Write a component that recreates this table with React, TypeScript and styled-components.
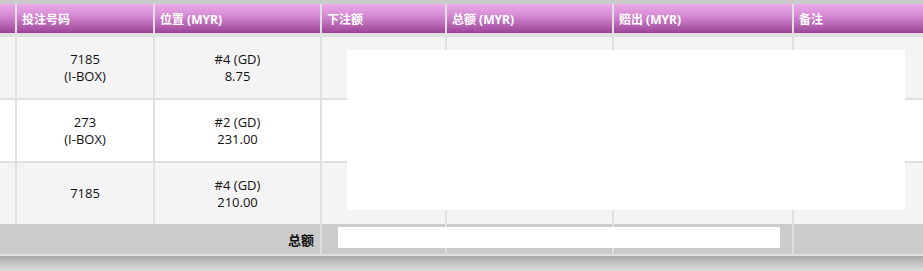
import { createGlobalStyle, styled } from "styled-components";

const GlobalStyle = createGlobalStyle`
  html, body {
    margin: 0;
    padding: 0;
    background: #e0e0e0;
  }
  body {
    font-family: "Open Sans", "Noto Sans CJK SC", sans-serif;
    font-size: 12px;
    color: #111;
  }
`;

const COLUMNS = "15px 136px 165px 123px 165px 178px 1fr";

const Board = styled.div`
  position: relative;
  width: 923px;
  height: 271px;
  overflow: hidden;
  background: #e0e0e0;
`;

const TopBar = styled.div`
  height: 4px;
  background: #c9c9c9;
`;

const Row = styled.div<{ $gapTop?: number }>`
  display: grid;
  grid-template-columns: ${COLUMNS};
  column-gap: 2px;
  margin-top: ${(p) => p.$gapTop ?? 0}px;
`;

const HeadCell = styled.div`
  height: 29px;
  display: flex;
  align-items: center;
  padding-left: 5px;
  background: linear-gradient(#eaaae8, #d98fd6 35%, #9c4498);
  color: #fff;
  font-weight: 700;
  white-space: nowrap;
  overflow: hidden;
`;

const Cell = styled.div<{ $alt?: boolean }>`
  height: 61px;
  display: flex;
  flex-direction: column;
  align-items: center;
  justify-content: center;
  font-size: 13px;
  line-height: 17px;
  background: ${(p) => (p.$alt ? "#f4f4f4" : "#ffffff")};
`;

const TotalLabel = styled.div`
  grid-column: 1 / span 3;
  height: 30px;
  display: flex;
  align-items: center;
  justify-content: flex-end;
  padding-right: 6px;
  font-size: 13px;
  font-weight: 700;
  background: #cbcbcb;
`;

const TotalCell = styled.div`
  height: 30px;
  background: #cbcbcb;
`;

const BottomShade = styled.div`
  margin-top: 2px;
  height: 15px;
  background: linear-gradient(#a8a8a8, #dedede);
`;

const Mask = styled.div<{ $x: number; $y: number; $w: number; $h: number }>`
  position: absolute;
  left: ${(p) => p.$x}px;
  top: ${(p) => p.$y}px;
  width: ${(p) => p.$w}px;
  height: ${(p) => p.$h}px;
  background: #ffffff;
`;

const headers = ["", "投注号码", "位置 (MYR)", "下注额", "总额 (MYR)", "赔出 (MYR)", "备注"];

const bets = [
  { number: "7185", type: "(I-BOX)", pos: "#4 (GD)", odds: "8.75" },
  { number: "273", type: "(I-BOX)", pos: "#2 (GD)", odds: "231.00" },
  { number: "7185", type: "", pos: "#4 (GD)", odds: "210.00" },
];

export default function App() {
  return (
    <Board>
      <GlobalStyle />
      <TopBar />
      <Row>
        {headers.map((h, i) => (
          <HeadCell key={i}>{h}</HeadCell>
        ))}
      </Row>
      {bets.map((b, i) => (
        <Row key={i} $gapTop={i === 0 ? 4 : 2}>
          <Cell $alt={i % 2 === 0} />
          <Cell $alt={i % 2 === 0}>
            <span>{b.number}</span>
            {b.type && <span>{b.type}</span>}
          </Cell>
          <Cell $alt={i % 2 === 0}>
            <span>{b.pos}</span>
            <span>{b.odds}</span>
          </Cell>
          <Cell $alt={i % 2 === 0} />
          <Cell $alt={i % 2 === 0} />
          <Cell $alt={i % 2 === 0} />
          <Cell $alt={i % 2 === 0} />
        </Row>
      ))}
      <Row>
        <TotalLabel>总额</TotalLabel>
        <TotalCell />
        <TotalCell />
        <TotalCell />
        <TotalCell />
      </Row>
      <BottomShade />
      <Mask $x={347} $y={50} $w={558} $h={160} />
      <Mask $x={338} $y={227} $w={442} $h={21} />
    </Board>
  );
}
